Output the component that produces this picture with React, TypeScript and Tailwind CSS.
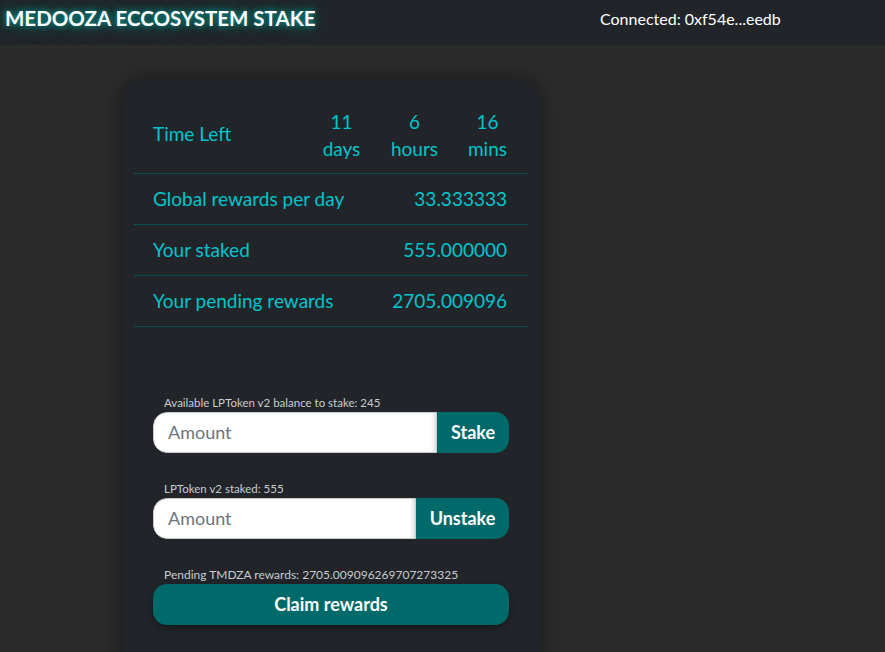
export default function App() {
  const rows = [
    { label: "Global rewards per day", value: "33.333333" },
    { label: "Your staked", value: "555.000000" },
    { label: "Your pending rewards", value: "2705.009096" },
  ];
  const time = [
    { n: "11", u: "days" },
    { n: "6", u: "hours" },
    { n: "16", u: "mins" },
  ];

  return (
    <div className="h-[652px] overflow-hidden bg-[#2b2b2b] font-['Lato',sans-serif]">
      {/* header */}
      <div className="h-[45px] bg-[#212529] flex items-start justify-between">
        <div className="pl-[5px] pt-[3px] text-[20.5px] font-bold text-white [text-shadow:0_0_6px_#0aa,0_0_16px_#076]">
          MEDOOZA ECCOSYSTEM STAKE
        </div>
        <div className="w-[285px] pt-[7px] text-[16px] text-white">Connected: 0xf54e...eedb</div>
      </div>

      {/* card */}
      <div className="ml-[122px] mt-[35px] w-[418px] h-[600px] rounded-[22px] bg-[#212529] px-[12px] pt-[16px] shadow-[0_0_20px_rgba(0,0,0,0.45)] text-[#00c4cc]">
        <div className="flex items-center h-[78px] border-b border-[#0d4e54] pl-[19px] pr-[4px] text-[19px]">
          <div className="flex-1">Time Left</div>
          {time.map((t) => (
            <div key={t.u} className="w-[73px] text-center leading-[27px]">
              <div>{t.n}</div>
              <div>{t.u}</div>
            </div>
          ))}
        </div>
        {rows.map((r) => (
          <div key={r.label} className="flex items-center justify-between h-[51px] border-b border-[#0d4e54] pl-[19px] pr-[21px] text-[19px]">
            <span>{r.label}</span>
            <span>{r.value}</span>
          </div>
        ))}

        <div className="px-[19px] pt-[68px] flex flex-col">
          <div className="pl-[11px] text-[11.5px] leading-[16px] text-[#c9ccd0]">Available LPToken v2 balance to stake: 245</div>
          <div className="flex h-[41px] rounded-[14px] overflow-hidden mt-[1px]">
            <input
              placeholder="Amount"
              className="flex-1 min-w-0 bg-white pl-[14px] text-[18px] text-[#333] placeholder:text-[#6c757d] outline-none border border-[#ccc] rounded-l-[14px] shadow-[inset_-4px_0_4px_-2px_rgba(0,0,0,0.15)]"
            />
            <button className="w-[72px] bg-[#006a6a] text-white text-[18px] font-bold">Stake</button>
          </div>

          <div className="pl-[11px] mt-[28px] text-[11.5px] leading-[16px] text-[#c9ccd0]">LPToken v2 staked: 555</div>
          <div className="flex h-[41px] rounded-[14px] overflow-hidden mt-[1px]">
            <input
              placeholder="Amount"
              className="flex-1 min-w-0 bg-white pl-[14px] text-[18px] text-[#333] placeholder:text-[#6c757d] outline-none border border-[#ccc] rounded-l-[14px] shadow-[inset_-4px_0_4px_-2px_rgba(0,0,0,0.15)]"
            />
            <button className="w-[93px] bg-[#006a6a] text-white text-[18px] font-bold">Unstake</button>
          </div>

          <div className="pl-[11px] mt-[28px] text-[12px] leading-[16px] text-[#c9ccd0]">Pending TMDZA rewards: 2705.009096269707273325</div>
          <button className="h-[41px] mt-[1px] rounded-[14px] bg-[#006a6a] text-white text-[18px] font-bold shadow-[0_2px_6px_rgba(0,0,0,0.4)]">
            Claim rewards
          </button>
        </div>
      </div>
    </div>
  );
}
